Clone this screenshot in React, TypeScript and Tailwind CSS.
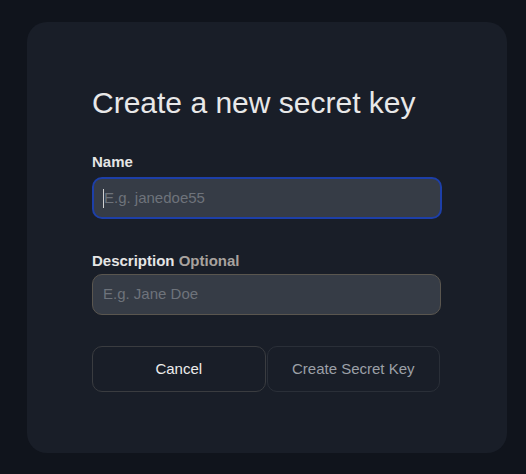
export default function App() {
  return (
    <main
      className="min-h-screen w-full bg-[#10141c] pt-[22px] pl-[27px]"
      style={{ fontFamily: '"Liberation Sans", Arial, sans-serif' }}
    >
      <div className="w-[480px] h-[431px] rounded-[20px] bg-[#191e28] px-[65px] pt-[61px]">
        <h1 className="text-[30px] leading-[40px] text-[#e8e8e8]">Create a new secret key</h1>

        {/* Name */}
        <div className="mt-[30px]">
          <label className="block text-[15px] leading-[18px] font-bold text-[#e5e5e5]">Name</label>
          <div className="mt-[6px] h-[42px] rounded-[10px] border-2 border-[#1d3fa8] bg-[#363c46] flex items-center px-[9px]">
            <span className="w-px h-[19px] bg-[#d0d0d0]" />
            <span className="text-[15px] text-[#6e737b]">E.g. janedoe55</span>
          </div>
        </div>

        {/* Description */}
        <div className="mt-[33px]">
          <label className="block text-[15px] leading-[18px] font-bold text-[#e5e5e5]">
            Description <span className="text-[#a8a29e]">Optional</span>
          </label>
          <div className="mt-[4px] h-[41px] w-[349px] rounded-[10px] border border-[#5a564f] bg-[#363c46] flex items-center px-[10px]">
            <span className="text-[15px] text-[#6e737b]">E.g. Jane Doe</span>
          </div>
        </div>

        {/* Actions */}
        <div className="mt-[31px] flex w-[348px] gap-px">
          <button className="flex-1 h-[46px] rounded-[10px] border border-[#3a3c40] text-[15px] text-[#ececec]">
            Cancel
          </button>
          <button className="flex-1 h-[46px] rounded-[10px] border border-[#2a2f38] text-[15px] text-[#9ca0a7]">
            Create Secret Key
          </button>
        </div>
      </div>
    </main>
  );
}
